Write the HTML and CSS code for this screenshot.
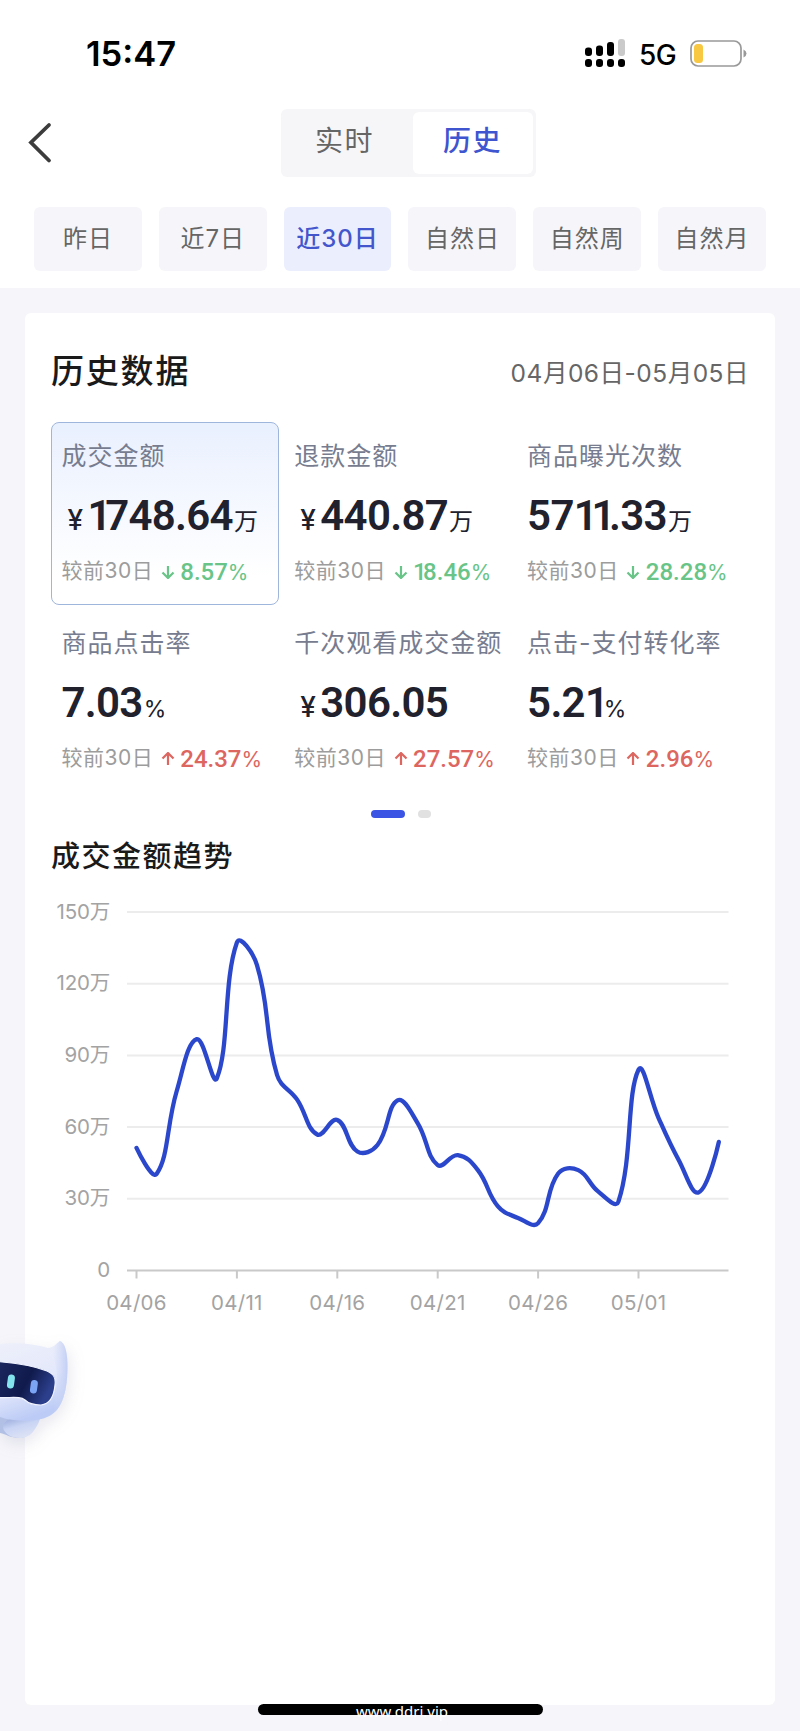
FILE: index.html
```html
<!DOCTYPE html>
<html lang="zh-CN">
<head>
  <meta charset="UTF-8" />
  <meta name="viewport" content="width=device-width, initial-scale=1.0" />
  <title>历史数据</title>
  <link rel="stylesheet" href="styles.css">
</head>
<body>
  <header class="top">
    <div class="status">
      <span class="time">15:47</span>
      <div class="status-icons">
        <svg class="signal" width="40" height="28" viewBox="0 0 40 28">
          <rect x="0" y="8.500" width="7" height="8.500" rx="3" />
          <rect x="11" y="6.500" width="7" height="10.500" rx="3" />
          <rect x="22" y="3" width="7" height="14" rx="3" />
          <rect x="33" y="0" width="7" height="17" rx="3" fill="#cacaca" />
          <rect x="0" y="20" width="7" height="8" rx="3" />
          <rect x="11" y="20" width="7" height="8" rx="3" />
          <rect x="22" y="20" width="7" height="8" rx="3" />
          <rect x="33" y="20" width="7" height="8" rx="3" />
        </svg>
        <span class="network">5G</span>
        <svg class="battery" width="57" height="27" viewBox="0 0 57 27">
          <rect x="1" y="1" width="50" height="25" rx="7" fill="none" stroke="#999" stroke-width="1.700" />
          <rect x="4" y="4" width="9" height="19" rx="3.500" fill="#f8c842" />
          <path d="M53.500 9.500q3 1.500 3 4t-3 4z" fill="#999" />
        </svg>
      </div>
    </div>

    <div class="nav">
      <svg class="back" width="24" height="42" viewBox="0 0 24 42">
        <path d="M21 3L3 20.500L21 38.500" fill="none" stroke="#3c3c3c" stroke-width="3.800" stroke-linecap="round" />
      </svg>
      <div class="segment">
        <span>实时</span>
        <span class="active">历史</span>
      </div>
    </div>

    <div class="tabs">
      <span>昨日</span>
      <span>近7日</span>
      <span class="active">近30日</span>
      <span>自然日</span>
      <span>自然周</span>
      <span>自然月</span>
    </div>
  </header>

  <main class="card">
    <div class="card-head">
      <h2>历史数据</h2>
      <span class="range">04月06日-05月05日</span>
    </div>

    <div class="metrics">
      <div class="metric selected">
        <div class="label">成交金额</div>
        <div class="value"><i>¥</i><b><s>1</s>748.64</b><em>万</em></div>
        <div class="compare">较前30日<svg class="down" viewBox="0 0 14 14"><path d="M7 1V13M1.500 7.500L7 13L12.500 7.500" /></svg><span class="down">8.57<u>%</u></span></div>
      </div>
      <div class="metric">
        <div class="label">退款金额</div>
        <div class="value"><i>¥</i><b>440.87</b><em>万</em></div>
        <div class="compare">较前30日<svg class="down" viewBox="0 0 14 14"><path d="M7 1V13M1.500 7.500L7 13L12.500 7.500" /></svg><span class="down"><s>1</s>8.46<u>%</u></span></div>
      </div>
      <div class="metric">
        <div class="label">商品曝光次数</div>
        <div class="value"><b>57<s>11</s>.33</b><em>万</em></div>
        <div class="compare">较前30日<svg class="down" viewBox="0 0 14 14"><path d="M7 1V13M1.500 7.500L7 13L12.500 7.500" /></svg><span class="down">28.28<u>%</u></span></div>
      </div>
      <div class="metric">
        <div class="label">商品点击率</div>
        <div class="value"><b>7.03</b><em class="pct">%</em></div>
        <div class="compare">较前30日<svg class="up" viewBox="0 0 14 14"><path d="M7 13V1M1.500 6.500L7 1L12.500 6.500" /></svg><span class="up">24.37<u>%</u></span></div>
      </div>
      <div class="metric">
        <div class="label">千次观看成交金额</div>
        <div class="value"><i>¥</i><b>306.05</b></div>
        <div class="compare">较前30日<svg class="up" viewBox="0 0 14 14"><path d="M7 13V1M1.500 6.500L7 1L12.500 6.500" /></svg><span class="up">27.57<u>%</u></span></div>
      </div>
      <div class="metric">
        <div class="label">点击-支付转化率</div>
        <div class="value"><b>5.2<s>1</s></b><em class="pct">%</em></div>
        <div class="compare">较前30日<svg class="up" viewBox="0 0 14 14"><path d="M7 13V1M1.500 6.500L7 1L12.500 6.500" /></svg><span class="up">2.96<u>%</u></span></div>
      </div>
    </div>

    <div class="pager"><span class="on"></span><span></span></div>

    <h3>成交金额趋势</h3>
    <svg id="chart" class="chart" width="698" height="440" viewBox="0 0 698 440"></svg>
  </main>

  <!-- floating assistant -->
  <svg class="robot" width="100" height="140" viewBox="0 0 100 140">
    <defs>
      <linearGradient id="head" x1="0" y1="0" x2="0.300" y2="1">
        <stop offset="0" stop-color="#eef0fa" />
        <stop offset="0.600" stop-color="#e3e8fb" />
        <stop offset="1" stop-color="#bccbf6" />
      </linearGradient>
      <linearGradient id="ear" x1="0" y1="0" x2="1" y2="0">
        <stop offset="0.300" stop-color="#cdd7f6" stop-opacity="0" />
        <stop offset="1" stop-color="#c3cff4" />
      </linearGradient>
      <linearGradient id="face" x1="0" y1="0" x2="1" y2="0.400">
        <stop offset="0" stop-color="#1b2760" />
        <stop offset="0.600" stop-color="#101a4c" />
        <stop offset="1" stop-color="#2c3f8c" />
      </linearGradient>
      <linearGradient id="body" x1="0" y1="0" x2="0.500" y2="1">
        <stop offset="0" stop-color="#93a5d8" />
        <stop offset="0.500" stop-color="#c9d4f4" />
        <stop offset="1" stop-color="#dde3f5" />
      </linearGradient>
    </defs>
    <path d="M0 92H40C37 104 30 117 20 117C10 117 6 113 0 112Z" fill="#b3c0e6" />
    <path d="M3 107C3 98 14 94 40 98C36 109 30 117 20 117C11 117 5 113 3 107Z" fill="url(#body)" />
    <path d="M0 23C18 21 34 23 48 27C53 27 56 23 60 20C65 21 68 33 67.500 48C67 73 61 91 47 96C36 101 14 101 0 96Z" fill="url(#head)" />
    <path d="M50 27C54 26 57 22 60 20C65 21 68 33 67.500 48C67 73 61 91 47 96C58 80 62 55 50 27Z" fill="url(#ear)" />
    <path d="M-3 40.500C17 42 34 45 47 50C54 53 56 57 55 64C54 75 50 83 41 84C32 84 28 82 25 79C20 75 13 77 -3 76.500Z" fill="url(#face)" stroke="#f1f4ff" stroke-width="1.200" />
    <rect x="7.500" y="53.500" width="7" height="14" rx="3.500" fill="#84e4ee" transform="rotate(8 11 60)" />
    <rect x="30.500" y="59" width="7" height="13.500" rx="3.500" fill="#7ba4f5" transform="rotate(8 34 65)" />
  </svg>

  <div class="home-bar">www.ddri.vip</div>

  <script>
    // daily turnover, unit: 万
    const values = [
      51.3, 40.4, 75, 96.8, 80.4, 137.2, 127.8, 81.8, 71.5, 56.9,
      63, 49.8, 52.5, 71.2, 61.7, 44.1, 48.3, 42, 26.8, 22,
      19.8, 40.6, 42, 33, 28.8, 84, 63.8, 46.2, 32.7, 53.8
    ];
    const left = 76, right = 677.5, base = 380.5, unit = 71.7 / 30;
    const step = 20.08, first = 85.5;

    let svg = '';
    for (let v = 0; v <= 150; v += 30) {
      const y = base - v * unit;
      svg += `<line class="${v ? 'grid' : 'axis'}" x1="${left}" x2="${right}" y1="${y}" y2="${y}" />`;
      svg += `<text class="y-label" x="59" y="${y + 6.5}">${v ? v + '万' : 0}</text>`;
    }
    ['04/06', '04/11', '04/16', '04/21', '04/26', '05/01'].forEach((d, i) => {
      const x = first + i * 5 * step;
      svg += `<line class="tick" x1="${x}" x2="${x}" y1="${base}" y2="${base + 8}" />`;
      svg += `<text class="x-label" x="${x}" y="${base + 39}">${d}</text>`;
    });

    const pts = values.map((v, i) => [first + i * step, base - v * unit]);

    // smooth line, control points weighted by segment length
    function smoothPath(p) {
      let d = `M${p[0]}`;
      let cp0 = p[0];
      for (let i = 1; i < p.length; i++) {
        const prev = p[i - 1], cur = p[i], next = p[i + 1];
        let cp1 = cur, nextCp = cur;
        if (next) {
          const lp = Math.hypot(cur[0] - prev[0], cur[1] - prev[1]);
          const ln = Math.hypot(next[0] - cur[0], next[1] - cur[1]);
          const r = 0.42 / (ln + lp);
          cp1 = cur.map((c, k) => c - (next[k] - prev[k]) * r * lp);
          nextCp = cur.map((c, k) => c + (next[k] - prev[k]) * r * ln);
        }
        d += `C${cp0} ${cp1} ${cur}`;
        cp0 = nextCp;
      }
      return d;
    }

    svg += `<path class="line" d="${smoothPath(pts)}" />`;
    document.getElementById('chart').innerHTML = svg;
  </script>
</body>
</html>
```
FILE: styles.css
```css
* {
  box-sizing: border-box;
}
body {
  margin: 0;
  height: 1731px;
  position: relative;
  overflow: hidden;
  background: #f6f6fa;
  font-family: Inter, "Noto Sans CJK SC", sans-serif;
  color: #1a1a1a;
}

/* header */
.top {
  height: 288px;
  background: #fff;
}
.status {
  height: 109px;
  padding: 0 53px 0 86px;
  display: flex;
  justify-content: space-between;
}
.time {
  margin-top: 33px;
  font-size: 34.500px;
  line-height: 41px;
  font-weight: 600;
  color: #000;
}
.status-icons {
  display: flex;
  align-items: flex-start;
  padding-top: 39px;
}
.network {
  font-size: 28px;
  line-height: 32px;
  font-weight: 500;
  color: #000;
  width: 37px;
  margin: 0 14px;
  letter-spacing: -0.5px;
}
.battery {
  margin-top: 1px;
}
.nav {
  display: flex;
  height: 68px;
}
.back {
  margin: 13px 0 0 28px;
}
.segment {
  margin-left: 229px;
  width: 255px;
  height: 68px;
  padding: 3px;
  border-radius: 6px;
  background: #f6f6f9;
  display: flex;
}
.segment span {
  flex: 1;
  padding-right: 8px;
  font-size: 28px;
  line-height: 58px;
  letter-spacing: 1.500px;
  text-align: center;
  color: #666;
}
.segment span.active {
  flex: 0 0 120px;
  padding-right: 1px;
  border-radius: 6px;
  background: #fff;
  color: #3f55d0;
  font-weight: 500;
}
.tabs {
  display: flex;
  gap: 17px;
  padding: 30px 34px 0;
}
.tabs span {
  flex: 1;
  height: 64px;
  border-radius: 6px;
  background: #f6f6fa;
  font-size: 24px;
  line-height: 64px;
  letter-spacing: 1px;
  text-align: center;
  white-space: nowrap;
  color: #666;
}
.tabs span.active {
  background: #ebeffd;
  color: #4356cc;
  font-weight: 500;
}

/* card */
.card {
  margin: 25px 25px 0;
  height: 1392px;
  padding: 34px 26px 0;
  border-radius: 6px;
  background: #fff;
}
.card-head {
  display: flex;
  justify-content: space-between;
  align-items: center;
  height: 48px;
}
h2 {
  margin: 0;
  font-size: 33px;
  line-height: 48px;
  font-weight: 500;
  letter-spacing: 1.800px;
}
.range {
  font-size: 24.500px;
  letter-spacing: 0.500px;
  color: #666;
}
.metrics {
  margin-top: 27px;
  display: grid;
  grid-template-columns: repeat(3, 228px);
  gap: 4px 4.800px;
}
.metric {
  height: 183px;
  padding: 14px 0 0 9.500px;
  border: 1.500px solid transparent;
  border-radius: 8px;
  white-space: nowrap;
}
.metric.selected {
  border-color: #9fb6dc;
  background: linear-gradient(#e9f0fe, #fff 85%);
}
.label {
  height: 38px;
  line-height: 38px;
  font-size: 25px;
  letter-spacing: 1px;
  color: #777c8f;
}
.value {
  display: flex;
  align-items: baseline;
  height: 60px;
  line-height: 62px;
  margin-top: 10px;
  font-family: Roboto, "Noto Sans CJK SC", sans-serif;
  color: #20212c;
}
.value b {
  font-size: 42px;
  font-weight: 600;
  letter-spacing: -0.700px;
}
/* narrow figure one */
.value s,
.compare s {
  text-decoration: none;
  letter-spacing: -0.150em;
}
.value i {
  margin-left: 6px;
  width: 20px;
  font-family: Inter, sans-serif;
  font-style: normal;
  font-size: 28px;
  font-weight: 500;
}
.value em {
  margin-left: 1px;
  font-style: normal;
  font-size: 24px;
}
.value .pct {
  font-family: Inter, sans-serif;
  font-size: 23px;
}
.compare {
  display: flex;
  align-items: center;
  height: 30px;
  margin-top: 9px;
  font-size: 21px;
  letter-spacing: 0.500px;
  color: #9c9c9c;
}
.compare svg {
  width: 14px;
  height: 14px;
  margin: 6px 5.500px 0 7.500px;
  fill: none;
  stroke: currentColor;
  stroke-width: 2.200;
}
.compare span {
  margin-top: 5px;
  font-family: Roboto, sans-serif;
  font-size: 24px;
  font-weight: 500;
  letter-spacing: 0;
}
.compare u {
  text-decoration: none;
  font-family: Inter, sans-serif;
  font-size: 21px;
  font-weight: 400;
}
.compare .down {
  color: #68c487;
}
.compare .up {
  color: #dd6660;
}
.pager {
  display: flex;
  justify-content: center;
  gap: 13px;
  margin: 18px 0 0 2px;
}
.pager span {
  width: 13px;
  height: 8px;
  border-radius: 4px;
  background: #e1e1e1;
}
.pager .on {
  width: 34px;
  background: #3b54e4;
}
h3 {
  margin: 18px 0 0;
  height: 42px;
  font-size: 29px;
  line-height: 42px;
  font-weight: 500;
  letter-spacing: 1.500px;
}

/* chart */
.chart {
  display: block;
  margin-top: 12px;
}
.grid {
  stroke: #ececec;
  stroke-width: 2;
}
.axis {
  stroke: #c9c9c9;
  stroke-width: 2;
}
.tick {
  stroke: #c9c9c9;
  stroke-width: 2;
}
.line {
  fill: none;
  stroke: #2b47cb;
  stroke-width: 4.300;
  stroke-linecap: round;
  stroke-linejoin: round;
}
.y-label,
.x-label {
  font-size: 20.500px;
  fill: #a3a3a3;
}
.y-label {
  text-anchor: end;
  letter-spacing: -0.200px;
}
.x-label {
  text-anchor: middle;
  letter-spacing: 0.300px;
}

.robot {
  position: absolute;
  left: 0;
  top: 1321px;
  filter: drop-shadow(2px 6px 8px rgba(90, 90, 140, 0.14));
}
.home-bar {
  position: absolute;
  left: 258px;
  top: 1704px;
  width: 285px;
  height: 11px;
  padding-left: 3px;
  border-radius: 6px;
  background: #000;
  color: #fff;
  font-family: "Noto Sans", sans-serif;
  font-size: 15px;
  line-height: 14px;
  text-align: center;
}
```
